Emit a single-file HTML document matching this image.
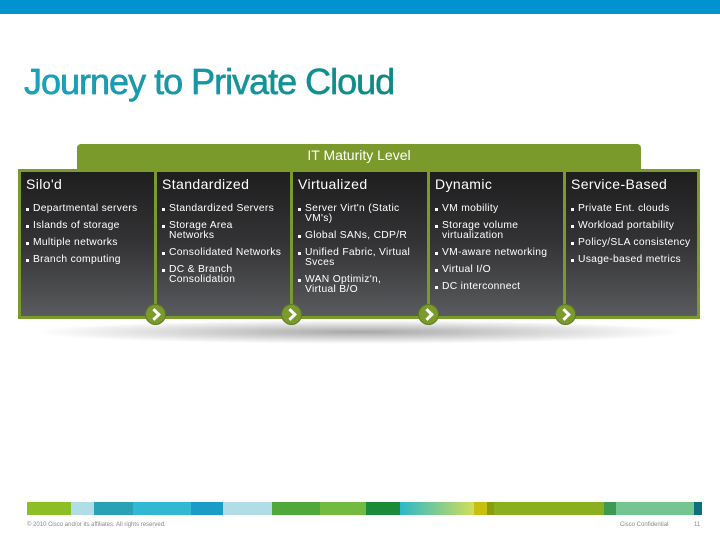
<!DOCTYPE html><html><head><style>
body{margin:0;width:720px;height:540px;background:#fff;position:relative;overflow:hidden;font-family:"Liberation Sans",sans-serif}
.a{position:absolute}
.col{position:absolute;top:172px;height:144px;color:#fff;background:linear-gradient(#1e1e1f,#343436 50%,#5a5b5e)}
.col h3{margin:0;position:absolute;left:5px;top:4px;font-weight:normal;font-size:14px;letter-spacing:.4px}
.col ul{position:absolute;left:5px;top:32px;margin:0;padding:0;list-style:none;font-size:10.3px;line-height:10px;width:127px;letter-spacing:.3px}
.col li{padding-left:7px;position:relative;margin-bottom:7px}
.col li:before{content:"";position:absolute;left:0;top:4px;width:3px;height:3px;background:#fff}
.arr{position:absolute;top:305px;width:19px;height:19px;border-radius:50%;background:#7a9a2c;box-shadow:0 0 0 1px #5d7a1f}
.arr:after{content:"";position:absolute;left:4px;top:5px;width:6px;height:6px;border-right:3px solid #fff;border-top:3px solid #fff;transform:rotate(45deg)}
</style></head><body>
<div class="a" style="left:0;top:0;width:720px;height:14px;background:#0093d0"></div>
<div class="a" style="left:24px;top:61px;font-size:36px;letter-spacing:-1px;-webkit-text-stroke:0.5px #1a9aaa;background:linear-gradient(90deg,#1aa3c4,#12887a);-webkit-background-clip:text;color:transparent">Journey to Private Cloud</div>
<div class="a" style="left:30px;top:320px;width:660px;height:24px;border-radius:50%;background:radial-gradient(ellipse at center,#a8a8a8,#fff 70%)"></div>
<div class="a" style="left:77px;top:144px;width:564px;height:30px;background:#7a9a2c;border-radius:4px 4px 0 0"></div>
<div class="a" style="left:18px;top:169px;width:682px;height:150px;background:#7a9a2c"></div>
<div class="a" style="left:77px;top:147px;width:564px;text-align:center;color:#fff;font-size:14px">IT Maturity Level</div>
<div class="col" style="left:21px;width:133px"><h3>Silo'd</h3><ul><li>Departmental servers</li><li>Islands of storage</li><li>Multiple networks</li><li>Branch computing</li></ul></div>
<div class="col" style="left:157px;width:133px"><h3>Standardized</h3><ul><li>Standardized Servers</li><li>Storage Area<br>Networks</li><li>Consolidated Networks</li><li>DC &amp; Branch Consolidation</li></ul></div>
<div class="col" style="left:293px;width:134px"><h3>Virtualized</h3><ul><li>Server Virt'n (Static<br>VM's)</li><li>Global SANs, CDP/R</li><li>Unified Fabric, Virtual Svces</li><li>WAN Optimiz'n,<br>Virtual B/O</li></ul></div>
<div class="col" style="left:430px;width:133px"><h3>Dynamic</h3><ul><li>VM mobility</li><li>Storage volume virtualization</li><li>VM-aware networking</li><li>Virtual I/O</li><li>DC interconnect</li></ul></div>
<div class="col" style="left:566px;width:131px"><h3>Service-Based</h3><ul><li>Private Ent. clouds</li><li>Workload portability</li><li>Policy/SLA consistency</li><li>Usage-based metrics</li></ul></div>
<div class="arr" style="left:146px"></div><div class="arr" style="left:282px"></div><div class="arr" style="left:419px"></div><div class="arr" style="left:556px"></div>
<div class="a" style="top:502px;left:0;height:13px;width:720px">
<div class="a" style="left:27px;width:44px;height:13px;background:#8cbf26"></div>
<div class="a" style="left:71px;width:23px;height:13px;background:#b0dde6"></div>
<div class="a" style="left:94px;width:39px;height:13px;background:#2aa1b5"></div>
<div class="a" style="left:133px;width:58px;height:13px;background:#30b8d4"></div>
<div class="a" style="left:191px;width:32px;height:13px;background:#1a9cc9"></div>
<div class="a" style="left:223px;width:49px;height:13px;background:#b0dde6"></div>
<div class="a" style="left:272px;width:48px;height:13px;background:#4ea83a"></div>
<div class="a" style="left:320px;width:46px;height:13px;background:#72bb40"></div>
<div class="a" style="left:366px;width:34px;height:13px;background:#188c38"></div>
<div class="a" style="left:400px;width:74px;height:13px;background:linear-gradient(90deg,#2cb8c8,#d2de5a)"></div>
<div class="a" style="left:474px;width:13px;height:13px;background:#c8c010"></div>
<div class="a" style="left:487px;width:7px;height:13px;background:#8a9c10"></div>
<div class="a" style="left:494px;width:110px;height:13px;background:#8ab020"></div>
<div class="a" style="left:604px;width:12px;height:13px;background:#3e9a50"></div>
<div class="a" style="left:616px;width:78px;height:13px;background:#74c690"></div>
<div class="a" style="left:694px;width:8px;height:13px;background:#0c707a"></div>
</div>
<div class="a" style="left:27px;top:522px;font-size:6px;color:#888">© 2010 Cisco and/or its affiliates. All rights reserved.</div>
<div class="a" style="left:620px;top:522px;font-size:6px;color:#888">Cisco Confidential</div>
<div class="a" style="left:694px;top:522px;font-size:6px;color:#888">11</div>
</body></html>
